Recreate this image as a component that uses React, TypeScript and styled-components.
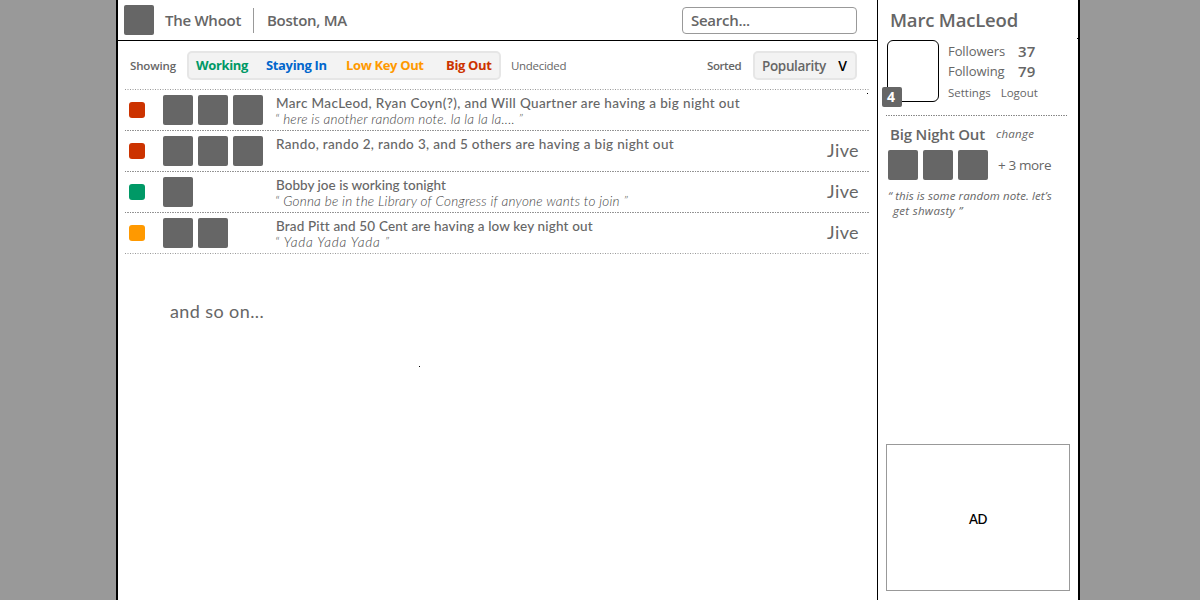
import React from "react";
import styled, { createGlobalStyle, css } from "styled-components";

const GlobalStyle = createGlobalStyle`
  * { box-sizing: border-box; }
  body { margin: 0; background: #999; }
`;

const colors = { gray: "#666", working: "#009966", staying: "#0066cc", lowKey: "#ff9900", big: "#cc3300" };

const humanist = css`font-family: "Open Sans", "Noto Sans", sans-serif;`;
const geometric = css`font-family: Lato, "Open Sans", sans-serif;`;

const dotted = (dark: string, light: string) => css`
  background-image: repeating-linear-gradient(
    90deg,
    ${dark} 0 1px, #fff 1px 2px, ${light} 2px 4px, #fff 4px 5px
  );
`;

const Page = styled.div`
  ${humanist}
  position: relative;
  display: flex;
  width: 964px;
  height: 600px;
  margin: 0 auto 0 116px;
  overflow: hidden;
  background: #fff;
  border: solid #000;
  border-width: 0 2px;
  color: ${colors.gray};
  white-space: nowrap;
`;

const Main = styled.main`
  width: 760px;
  border-right: 1px solid #000;
`;

const Header = styled.header`
  display: flex;
  align-items: center;
  height: 41px;
  padding: 0 20px 0 6px;
  border-bottom: 1px solid #000;
`;

const Avatar = styled.div`
  width: 30px;
  height: 30px;
  border-radius: 2px;
  background: ${colors.gray};
`;

const HeaderText = styled.div`
  font-size: 15px;
  font-weight: 600;
  line-height: 20px;
  letter-spacing: -0.27px;
`;

const Brand = styled(HeaderText)`
  width: 78px;
  margin-left: 11px;
`;

const Divider = styled.div`
  width: 1px;
  height: 25px;
  margin: 0 13px 0 10px;
  background: #999;
`;

const SearchBox = styled(HeaderText)`
  width: 175px;
  height: 27px;
  margin-left: auto;
  padding: 2px 0 0 8px;
  border: 1px solid #999;
  border-radius: 4px;
  line-height: 20px;
`;

const Filters = styled.div`
  display: flex;
  align-items: center;
  height: 48px;
  padding: 1px 20px 0 12px;
`;

const Caption = styled.div<{ $width: number; $tight: number; $light?: boolean }>`
  width: ${(p) => p.$width}px;
  font-size: 11.5px;
  font-weight: ${(p) => (p.$light ? 400 : 600)};
  letter-spacing: ${(p) => p.$tight}px;
  line-height: 18px;
`;

const Panel = styled.div`
  display: flex;
  align-items: center;
  height: 29px;
  border: 2px solid #e6e6e6;
  border-radius: 5px;
  background: #f3f3f3;
`;

const FilterPanel = styled(Panel)`
  width: 314px;
  margin: 0 10px 0 11px;
  padding: 0 0 2px 7px;
`;

const Filter = styled.div<{ $color: string; $width: number }>`
  width: ${(p) => p.$width}px;
  color: ${(p) => p.$color};
  font-size: 13px;
  font-weight: 700;
  letter-spacing: -0.35px;
  line-height: 18px;
`;

const SortPanel = styled(Panel)`
  width: 104px;
  margin-left: 12px;
  padding: 0 8px 0 7px;
  justify-content: space-between;
  font-size: 13.5px;
  font-weight: 600;
  letter-spacing: -0.35px;
  line-height: 18px;
`;

const Arrow = styled.span`
  color: #000;
  font-size: 14px;
  letter-spacing: 0;
`;

const Feed = styled.ul`
  width: 745px;
  margin: 0 0 0 7px;
  padding: 0 0 1px;
  list-style: none;
  ${dotted("#999", "#ccc")}
  background-size: 100% 1px;
  background-repeat: no-repeat;
  background-position: left bottom;
`;

const Row = styled.li<{ $soft?: boolean }>`
  display: flex;
  height: 41px;
  padding: 6px 11px 0 4px;
  ${(p) => (p.$soft ? dotted("#999", "#ccc") : dotted("#888", "#999"))}
  background-size: 100% 1px;
  background-repeat: no-repeat;
`;

const Status = styled.div<{ $color: string }>`
  width: 16px;
  height: 16px;
  margin: 7px 18px 0 0;
  border-radius: 3px;
  background: ${(p) => p.$color};
`;

const Avatars = styled.div`
  display: flex;
  gap: 5px;
  width: 113px;
`;

const Story = styled.div`
  ${geometric}
  flex: 1;
`;

const Headline = styled.div<{ $spacing: number }>`
  font-size: 13.5px;
  font-weight: 500;
  line-height: 16px;
  letter-spacing: ${(p) => p.$spacing}px;
`;

const Quote = styled.div<{ $spacing: number }>`
  margin-left: -1px;
  color: #444;
  font-size: 13.5px;
  font-weight: 300;
  font-style: italic;
  line-height: 16px;
  letter-spacing: ${(p) => p.$spacing}px;
`;

const Jive = styled.div`
  ${geometric}
  align-self: flex-start;
  margin-top: 3px;
  font-size: 18px;
  line-height: 22px;
  letter-spacing: 0.4px;
`;

const More = styled.div`
  ${geometric}
  margin: 46px 0 0 52px;
  font-size: 18px;
  line-height: 22px;
  letter-spacing: 0.4px;
`;

const Sidebar = styled.aside`
  display: flex;
  flex-direction: column;
  width: 200px;
  padding: 0 8px 9px;
`;

const UserName = styled.div`
  height: 40px;
  padding: 7px 0 0 4px;
  font-size: 18.5px;
  font-weight: 600;
  line-height: 26px;
  letter-spacing: -0.19px;
`;

const Profile = styled.div`
  display: flex;
  height: 75px;
  padding-left: 1px;
`;

const Portrait = styled.div`
  position: relative;
  width: 52px;
  height: 62px;
  margin-right: 9px;
  border: 1px solid #000;
  border-radius: 6px;
`;

const Badge = styled.div`
  position: absolute;
  left: -6px;
  bottom: -6px;
  width: 20px;
  height: 20px;
  padding-right: 2px;
  border-radius: 2px;
  background: ${colors.gray};
  color: #fff;
  font-size: 14px;
  font-weight: 700;
  line-height: 20px;
  text-align: center;
`;

const Stats = styled.div`
  padding-top: 1px;
`;

const Stat = styled.div`
  display: flex;
  height: 20px;
  font-size: 13px;
  line-height: 20px;
  letter-spacing: -0.08px;
`;

const StatLabel = styled.span`
  width: 70px;
`;

const Count = styled.span`
  font-size: 15px;
  font-weight: 600;
  line-height: 21px;
  letter-spacing: 0.1px;
`;

const Links = styled.div`
  display: flex;
  gap: 10px;
  padding-top: 2px;
  font-size: 11.5px;
  line-height: 20px;
`;

const Tonight = styled.section`
  padding: 9px 0 0 2px;
  ${dotted("#777", "#999")}
  background-size: 182px 1px;
  background-repeat: no-repeat;
`;

const TonightTitle = styled.div`
  display: flex;
  padding-left: 2px;
  font-size: 15px;
  font-weight: 600;
  line-height: 20px;
  letter-spacing: -0.17px;
`;

const Change = styled.span`
  margin-left: 11px;
  font-size: 11.5px;
  font-weight: 400;
  font-style: italic;
  letter-spacing: 0.25px;
`;

const Friends = styled.div`
  display: flex;
  gap: 5px;
  margin-top: 6px;
`;

const FriendsMore = styled.div`
  margin-left: 5px;
  font-size: 13.5px;
  line-height: 30px;
  letter-spacing: -0.38px;
`;

const Note = styled.div`
  margin-top: 8px;
  font-size: 11.5px;
  font-style: italic;
  line-height: 15px;
  letter-spacing: 0.09px;
`;

const NoteTail = styled.div`
  padding-left: 5px;
  letter-spacing: 0.3px;
`;

const Ad = styled.div`
  ${geometric}
  display: flex;
  align-items: center;
  justify-content: center;
  height: 147px;
  margin-top: auto;
  padding-top: 3px;
  border: 1px solid #999;
  color: #000;
  font-size: 13px;
  font-weight: 600;
  letter-spacing: -0.4px;
`;

/* Stray pixel marks that float over the sheet. */
const Speck = styled.i<{ $x: number; $y: number }>`
  position: absolute;
  left: ${(p) => p.$x}px;
  top: ${(p) => p.$y}px;
  width: 1px;
  height: 1px;
  background: #000;
`;

const filters = [
  { label: "Working", color: colors.working, width: 70 },
  { label: "Staying In", color: colors.staying, width: 80 },
  { label: "Low Key Out", color: colors.lowKey, width: 100 },
  { label: "Big Out", color: colors.big, width: 48 },
];

const rows = [
  { color: colors.big, people: 3, text: "Marc MacLeod, Ryan Coyn(?), and Will Quartner are having a big night out", ls: 0.364, note: "“ here is another random note. la la la la.... ”", noteLs: 0.22, jive: false },
  { color: colors.big, people: 3, text: "Rando, rando 2, rando 3, and 5 others are having a big night out", ls: 0.339, note: "", noteLs: 0, jive: true },
  { color: colors.working, people: 1, text: "Bobby joe is working tonight", ls: 0.021, note: "“ Gonna be in the Library of Congress if anyone wants to join ”", noteLs: 0.232, jive: true },
  { color: colors.lowKey, people: 2, text: "Brad Pitt and 50 Cent are having a low key night out", ls: 0.16, note: "“ Yada Yada Yada ”", noteLs: 0.83, jive: true },
];

const people = (n: number) => Array.from({ length: n }, (_, i) => <Avatar key={i} />);

export default function App() {
  return (
    <>
      <GlobalStyle />
      <Page>
        <Main>
          <Header>
            <Avatar />
            <Brand>The Whoot</Brand>
            <Divider />
            <HeaderText>Boston, MA</HeaderText>
            <SearchBox>Search...</SearchBox>
          </Header>
          <Filters>
            <Caption $width={46} $tight={-0.15}>Showing</Caption>
            <FilterPanel>
              {filters.map((f) => (
                <Filter key={f.label} $color={f.color} $width={f.width}>{f.label}</Filter>
              ))}
            </FilterPanel>
            <Caption $width={196} $tight={-0.3} $light>Undecided</Caption>
            <Caption $width={34} $tight={-0.4}>Sorted</Caption>
            <SortPanel>
              Popularity <Arrow>V</Arrow>
            </SortPanel>
          </Filters>
          <Feed>
            {rows.map((r, i) => (
              <Row key={r.text} $soft={i === 0}>
                <Status $color={r.color} />
                <Avatars>{people(r.people)}</Avatars>
                <Story>
                  <Headline $spacing={r.ls}>{r.text}</Headline>
                  {r.note && <Quote $spacing={r.noteLs}>{r.note}</Quote>}
                </Story>
                {r.jive && <Jive>Jive</Jive>}
              </Row>
            ))}
          </Feed>
          <More>and so on...</More>
        </Main>
        <Sidebar>
          <UserName>Marc MacLeod</UserName>
          <Profile>
            <Portrait>
              <Badge>4</Badge>
            </Portrait>
            <Stats>
              <Stat><StatLabel>Followers</StatLabel><Count>37</Count></Stat>
              <Stat><StatLabel>Following</StatLabel><Count>79</Count></Stat>
              <Links><span>Settings</span><span>Logout</span></Links>
            </Stats>
          </Profile>
          <Tonight>
            <TonightTitle>Big Night Out<Change>change</Change></TonightTitle>
            <Friends>{people(3)}<FriendsMore>+ 3 more</FriendsMore></Friends>
            <Note>
              “ this is some random note. let’s
              <NoteTail>get shwasty ”</NoteTail>
            </Note>
          </Tonight>
          <Ad>AD</Ad>
        </Sidebar>
        <Speck $x={749} $y={93} />
        <Speck $x={301} $y={366} />
        <Speck $x={959} $y={38} />
      </Page>
    </>
  );
}
